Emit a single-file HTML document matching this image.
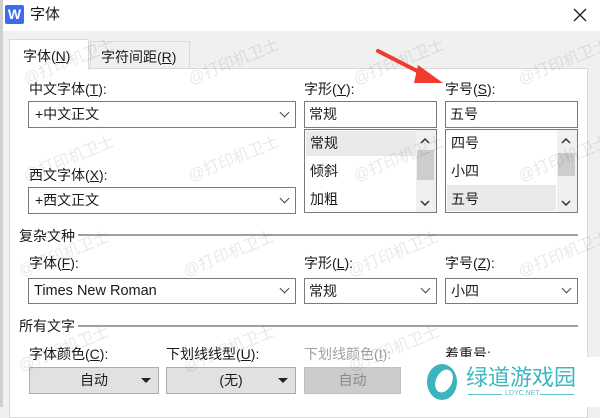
<!DOCTYPE html>
<html><head><meta charset="utf-8"><style>
*{margin:0;padding:0;box-sizing:border-box}
body{width:600px;height:407px;overflow:hidden;background:#f0f0f0;position:relative;font-family:"Liberation Sans","Noto Sans CJK SC",sans-serif;font-size:14px;color:#1a1a1a}
.a{position:absolute}
.t{position:absolute;white-space:nowrap;line-height:16px}
.box{position:absolute;background:#fff;border:1px solid #7a7a7a}
.chev{position:absolute;width:7px;height:7px;border-right:1.3px solid #444;border-bottom:1.3px solid #444;transform:rotate(45deg)}
.btn{position:absolute;background:#e1e1e1;border:1px solid #adadad;text-align:center;line-height:24px}
.tri{position:absolute;width:0;height:0;border-left:5px solid transparent;border-right:5px solid transparent;border-top:5px solid #222}
.wm{position:absolute;color:rgba(0,0,0,0.09);font-size:16px;transform:rotate(-22deg);white-space:nowrap}
.line{position:absolute;height:2px;background:#a0a0a0}
</style></head><body>
<div class="a" style="left:0;top:0;width:600px;height:31px;background:#fff"></div>
<div class="a" style="left:0;top:0;width:3px;height:407px;background:#d0d0d0"></div>
<div class="a" style="left:5px;top:5px;width:19px;height:19px;background:#3b6cf0;border-radius:2px;color:#fff;font-weight:bold;font-size:14px;text-align:center;line-height:19px">W</div>
<div class="t" style="left:30px;top:7px;font-size:15px">字体</div>
<svg class="a" style="left:573px;top:8px" width="14" height="14"><path d="M1 1L13 13M13 1L1 13" stroke="#222" stroke-width="1.4"/></svg>

<div class="a" style="left:90px;top:41px;width:100px;height:28px;background:#f0f0f0;border:1px solid #d9d9d9"></div>
<div class="t" style="left:101px;top:49px">字符间距(<u>R</u>)</div>
<div class="a" style="left:9px;top:68px;width:579px;height:350px;background:#fff;border:1px solid #d9d9d9"></div>
<div class="a" style="left:9px;top:39px;width:80px;height:31px;background:#fff;border:1px solid #d9d9d9;border-bottom:none"></div>
<div class="t" style="left:23px;top:48px">字体(<u>N</u>)</div>

<div class="t" style="left:29px;top:81px">中文字体(<u>T</u>):</div>
<div class="box" style="left:28px;top:101px;width:268px;height:27px"></div>
<div class="t" style="left:35px;top:106px">+中文正文</div>
<div class="chev" style="left:281px;top:109px"></div>
<div class="t" style="left:29px;top:167px">西文字体(<u>X</u>):</div>
<div class="box" style="left:28px;top:187px;width:268px;height:27px"></div>
<div class="t" style="left:35px;top:192px">+西文正文</div>
<div class="chev" style="left:281px;top:195px"></div>

<div class="t" style="left:304px;top:81px">字形(<u>Y</u>):</div>
<div class="box" style="left:304px;top:101px;width:133px;height:27px"></div>
<div class="t" style="left:309px;top:106px">常规</div>
<div class="box" style="left:304px;top:129px;width:133px;height:84px"></div>
<div class="a" style="left:306px;top:131px;width:110px;height:25px;background:#eaeaea"></div>
<div class="t" style="left:310px;top:135px">常规</div>
<div class="t" style="left:310px;top:163px">倾斜</div>
<div class="t" style="left:310px;top:191px">加粗</div>
<div class="a" style="left:416px;top:130px;width:20px;height:82px;background:#f0f0f0"></div>
<div class="a" style="left:417px;top:150px;width:17px;height:30px;background:#cdcdcd"></div>
<svg class="a" style="left:420px;top:138px" width="10" height="6"><path d="M1 5L5 1L9 5" fill="none" stroke="#333" stroke-width="1.5"/></svg>
<svg class="a" style="left:420px;top:200px" width="10" height="6"><path d="M1 1L5 5L9 1" fill="none" stroke="#333" stroke-width="1.5"/></svg>

<div class="t" style="left:445px;top:81px">字号(<u>S</u>):</div>
<div class="box" style="left:445px;top:101px;width:133px;height:27px"></div>
<div class="t" style="left:450px;top:106px">五号</div>
<div class="box" style="left:445px;top:129px;width:133px;height:84px"></div>
<div class="a" style="left:447px;top:185px;width:109px;height:26px;background:#eaeaea"></div>
<div class="t" style="left:451px;top:135px">四号</div>
<div class="t" style="left:451px;top:163px">小四</div>
<div class="t" style="left:451px;top:191px">五号</div>
<div class="a" style="left:557px;top:130px;width:20px;height:82px;background:#f0f0f0"></div>
<div class="a" style="left:558px;top:153px;width:17px;height:23px;background:#cdcdcd"></div>
<svg class="a" style="left:561px;top:138px" width="10" height="6"><path d="M1 5L5 1L9 5" fill="none" stroke="#333" stroke-width="1.5"/></svg>
<svg class="a" style="left:561px;top:200px" width="10" height="6"><path d="M1 1L5 5L9 1" fill="none" stroke="#333" stroke-width="1.5"/></svg>

<div class="t" style="left:19px;top:228px">复杂文种</div>
<div class="line" style="left:78px;top:234px;width:500px"></div>
<div class="t" style="left:29px;top:255px">字体(<u>F</u>):</div>
<div class="box" style="left:28px;top:278px;width:268px;height:26px"></div>
<div class="t" style="left:34px;top:283px;font-size:14.5px">Times New Roman</div>
<div class="chev" style="left:281px;top:285px"></div>
<div class="t" style="left:304px;top:255px">字形(<u>L</u>):</div>
<div class="box" style="left:304px;top:278px;width:133px;height:26px"></div>
<div class="t" style="left:309px;top:283px">常规</div>
<div class="chev" style="left:422px;top:285px"></div>
<div class="t" style="left:445px;top:255px">字号(<u>Z</u>):</div>
<div class="box" style="left:445px;top:278px;width:133px;height:26px"></div>
<div class="t" style="left:451px;top:283px">小四</div>
<div class="chev" style="left:563px;top:285px"></div>

<div class="t" style="left:19px;top:318px">所有文字</div>
<div class="line" style="left:78px;top:325px;width:500px"></div>
<div class="t" style="left:29px;top:346px">字体颜色(<u>C</u>):</div>
<div class="t" style="left:166px;top:346px">下划线线型(<u>U</u>):</div>
<div class="t" style="left:304px;top:346px;color:#a0a0a0">下划线颜色(<u>I</u>):</div>
<div class="t" style="left:445px;top:346px">着重号:</div>
<div class="btn" style="left:29px;top:367px;width:130px;height:27px">自动</div>
<div class="tri" style="left:141px;top:378px"></div>
<div class="btn" style="left:166px;top:367px;width:130px;height:27px">(无)</div>
<div class="tri" style="left:278px;top:378px"></div>
<div class="btn" style="left:304px;top:367px;width:97px;height:27px;background:#cccccc;border-color:#bfbfbf;color:#888">自动</div>

<div class="wm" style="left:20px;top:48px">@打印机卫士</div>
<div class="wm" style="left:185px;top:48px">@打印机卫士</div>
<div class="wm" style="left:350px;top:48px">@打印机卫士</div>
<div class="wm" style="left:515px;top:48px">@打印机卫士</div>
<div class="wm" style="left:20px;top:145px">@打印机卫士</div>
<div class="wm" style="left:185px;top:145px">@打印机卫士</div>
<div class="wm" style="left:350px;top:145px">@打印机卫士</div>
<div class="wm" style="left:515px;top:145px">@打印机卫士</div>
<div class="wm" style="left:15px;top:240px">@打印机卫士</div>
<div class="wm" style="left:180px;top:240px">@打印机卫士</div>
<div class="wm" style="left:345px;top:240px">@打印机卫士</div>
<div class="wm" style="left:515px;top:240px">@打印机卫士</div>
<div class="wm" style="left:15px;top:335px">@打印机卫士</div>
<div class="wm" style="left:180px;top:335px">@打印机卫士</div>
<div class="wm" style="left:345px;top:335px">@打印机卫士</div>

<svg class="a" style="left:370px;top:45px" width="80" height="50"><path d="M8 6L55 30" stroke="#f03a2e" stroke-width="4" stroke-linecap="round"/><path d="M48 20L73 38L44 38Z" fill="#f03a2e"/></svg>

<div class="a" style="left:410px;top:357px;width:190px;height:50px;background:#fff"></div>
<svg class="a" style="left:425px;top:362px" width="36" height="40"><ellipse cx="17" cy="20" rx="15" ry="18" fill="#3bb4bd"/><ellipse cx="19" cy="19" rx="8" ry="12" fill="#fff" transform="rotate(25 19 19)"/></svg>
<div class="t" style="left:466px;top:366px;font-size:22px;line-height:24px;color:#3bb8c0">绿道游戏园</div>
<div class="a" style="left:468px;top:394px;width:34px;height:1px;background:#5cc3c9"></div>
<div class="t" style="left:505px;top:389px;font-size:7px;line-height:9px;color:#5cc3c9">LDYC.NET</div>
<div class="a" style="left:540px;top:394px;width:34px;height:1px;background:#5cc3c9"></div>
</body></html>
